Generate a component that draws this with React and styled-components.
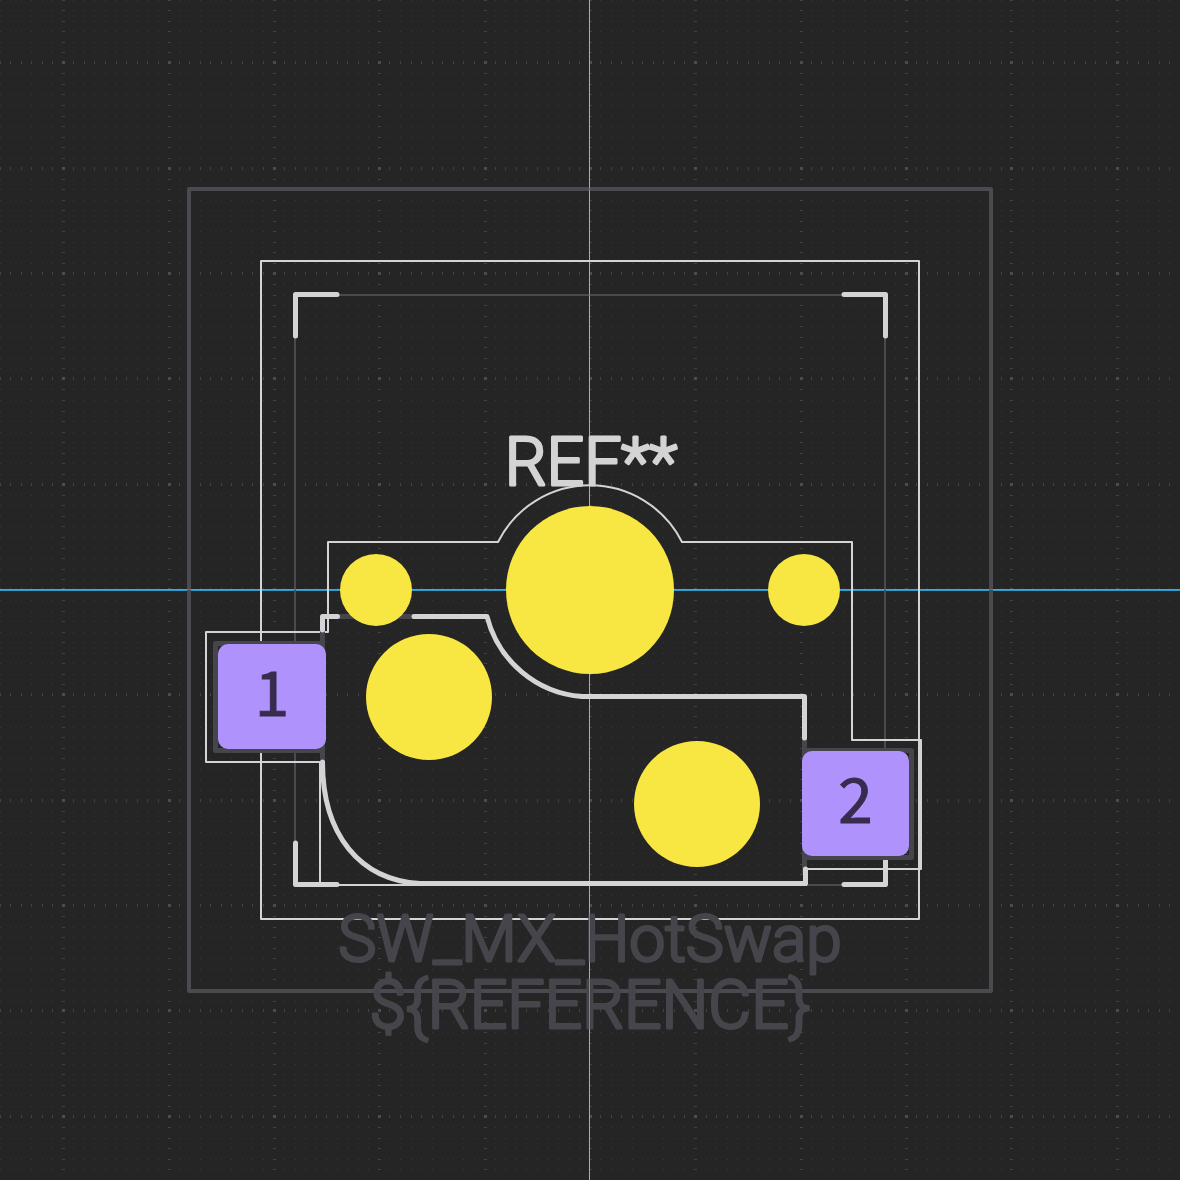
import React from "react";
import styled, { createGlobalStyle } from "styled-components";

const GlobalStyle = createGlobalStyle`
  body { margin: 0; background: #252525; }
`;

const Editor = styled.main`
  width: 100%;
  background: #252525;
`;

const Canvas = styled.svg`
  display: block;
  width: 100%;
  height: auto;
`;

const tones = { silk: "#d4d4d4", fab: "#46454b", user: "#4b4a50" };

const Stroke = styled.path`
  fill: none;
  stroke: ${(p) => tones[p.$tone]};
  stroke-width: ${(p) => p.$width}px;
  stroke-linecap: round;
  stroke-linejoin: round;
`;

const GridMark = styled.path`
  fill: ${(p) => p.$color};
  shape-rendering: crispEdges;
`;

const Axis = styled.rect`
  fill: ${(p) => p.$color};
  shape-rendering: crispEdges;
`;

const Hole = styled.circle`
  fill: #f8e642;
`;

const PadShape = styled.rect`
  fill: #af92fc;
`;

const PadNumber = styled.text`
  font: 400 62px "Noto Sans CJK JP", sans-serif;
  fill: #372c4e;
  stroke: #372c4e;
  stroke-width: 1px;
  text-anchor: middle;
`;

const Label = styled.text`
  font: 300 ${(p) => p.$size}px Roboto, "Liberation Sans", sans-serif;
  fill: ${(p) => tones[p.$tone]};
  stroke: ${(p) => tones[p.$tone]};
  stroke-width: 3px;
  stroke-linejoin: round;
  text-anchor: middle;
`;

const PITCH = 10.536;
const box = (x, y, w, h) => `M${x} ${y}h${w}v${h}h${-w}z`;

function buildGrid() {
  const steps = [];
  for (let k = -6; k <= 106; k++) {
    const major = k % 10 === 0;
    const at = Math.floor((major ? 63.65 : 63.35) + PITCH * k);
    steps.push({ major, x: at, y: major ? at - 1 : at });
  }
  let dots = "";
  let dashes = "";
  let crosses = "";
  for (const col of steps) {
    for (const row of steps) {
      if (col.major && row.major) crosses += box(col.x - 1, row.y - 1, 3, 3);
      else if (col.major) dashes += box(col.x - 1, row.y, 3, 1);
      else if (row.major) dashes += box(col.x, row.y - 1, 1, 3);
      else dots += box(col.x, row.y, 1, 1);
    }
  }
  return { dots, dashes, crosses };
}

const grid = buildGrid();

const holes = [
  { x: 376, y: 590, r: 36 },
  { x: 804, y: 590, r: 36 },
  { x: 590, y: 590, r: 84 },
  { x: 429, y: 697, r: 63 },
  { x: 697, y: 804, r: 63 },
];

const pads = [
  { name: "1", x: 218, y: 644, w: 108, h: 105 },
  { name: "2", x: 802, y: 751, w: 107, h: 105 },
];

function Grid() {
  return (
    <g>
      <GridMark $color="#393939" d={grid.dots} />
      <GridMark $color="#424244" d={grid.dashes} />
      <GridMark $color="#4b4b50" d={grid.crosses} />
    </g>
  );
}

function Pad({ name, x, y, w, h }) {
  return (
    <g>
      <PadShape x={x} y={y} width={w} height={h} rx="10" />
      <PadNumber x={x + w / 2} y={y + 72}>{name}</PadNumber>
    </g>
  );
}

export default function App() {
  return (
    <>
      <GlobalStyle />
      <Editor>
        <Canvas viewBox="0 0 1180 1180" role="img" aria-label="SW_MX_HotSwap footprint">
          <Grid />
          <Axis x="0" y="589" width="1180" height="2" $color="#2a9ccc" />
          <Axis x="0" y="589" width="1180" height="1" $color="#5d7884" />
          <Axis x="589" y="0" width="1" height="1180" $color="#4aa5cc" />

          <Stroke $tone="user" $width={4} d="M189 189H991V991H189z" />
          <Stroke $tone="user" $width={2} d="M295 295H885V885H295z" />
          <Stroke $tone="silk" $width={2} d="M261 261H919V919H261z" />
          <Stroke
            $tone="silk"
            $width={2}
            d="M206 632H328V542H498A103 103 0 0 1 682 542H852V740H921V869H806V885H320V762H206z"
          />

          <Stroke $tone="silk" $width={5} d="M295.5 336V294.5H337M844 294.5H885.5V336M295.5 843V884.5H337M844 884.5H885.5V843" />
          <Stroke $tone="fab" $width={5} d="M322.5 643.5H215.5V750.5H322.5M804.5 750.5H911.5V857.5H804.5M322.5 630V764M336 616.5H416M804.5 736V872" />
          <Stroke
            $tone="silk"
            $width={5}
            d="M322.5 630V616.5H337.5M414 616.5H487A106.4 106.4 0 0 0 582 696.5H804.5V738M322.5 762C322.5 835 360 880 420 883.5H805.5V869"
          />

          <Label $tone="silk" $size={66} x="591" y="485">REF**</Label>
          <Label $tone="fab" $size={64} x="590" y="961">SW_MX_HotSwap</Label>
          <Label $tone="fab" $size={66} x="590" y="1028">{"${REFERENCE}"}</Label>

          {holes.map((h) => (
            <Hole key={`${h.x}-${h.y}`} cx={h.x} cy={h.y} r={h.r} />
          ))}
          {pads.map((p) => (
            <Pad key={p.name} {...p} />
          ))}

          <Axis x="589" y="0" width="1" height="1180" $color="rgba(212, 212, 212, 0.45)" />
          <Axis x="0" y="589" width="1180" height="1" $color="rgba(212, 212, 212, 0.3)" />
        </Canvas>
      </Editor>
    </>
  );
}
